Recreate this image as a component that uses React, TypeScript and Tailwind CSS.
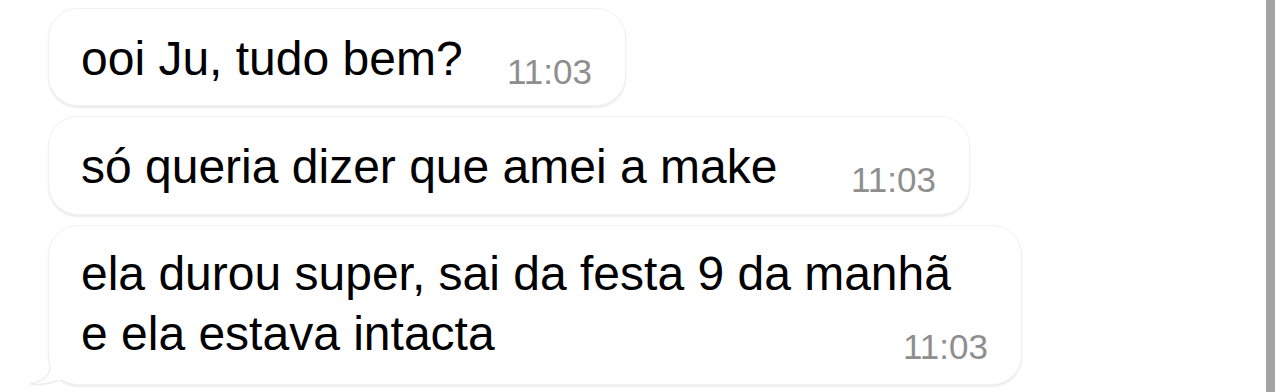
export default function App() {
  return (
    <div
      className="flex h-[392px] w-[1284px] overflow-hidden bg-white text-black"
      style={{ fontFamily: '"Liberation Sans", Arial, sans-serif' }}
    >
      <div className="flex flex-1 flex-col gap-[10px] pl-12 pt-2">
        {/* message 1 */}
        <div className="flex h-[98px] w-[578px] items-start justify-between rounded-[30px] border border-[#f1f1f1] bg-white pl-8 pr-[33px] pt-5 shadow-[0_2px_2px_rgba(0,0,0,0.08)]">
          <p className="text-[48px] leading-[60px]">ooi Ju, tudo bem?</p>
          <span className="mt-[25px] text-[35px] leading-[35px] text-[#8e8e8e]">11:03</span>
        </div>

        {/* message 2 */}
        <div className="flex h-[99px] w-[922px] items-start justify-between rounded-[30px] border border-[#f1f1f1] bg-white pl-8 pr-[33px] pt-5 shadow-[0_2px_2px_rgba(0,0,0,0.08)]">
          <p className="text-[48px] leading-[60px]">só queria dizer que amei a make</p>
          <span className="mt-[25px] text-[35px] leading-[35px] text-[#8e8e8e]">11:03</span>
        </div>

        {/* message 3 */}
        <div className="relative h-[160px] w-[974px]">
          <div className="flex h-full flex-col rounded-[30px] border border-[#f1f1f1] bg-white pl-8 pr-[33px] pt-[18px] shadow-[0_2px_2px_rgba(0,0,0,0.08)]">
            <p className="text-[48px] leading-[60px]">ela durou super, sai da festa 9 da manhã</p>
            <div className="flex items-start justify-between">
              <p className="text-[48px] leading-[60px]">e ela estava intacta</p>
              <span className="mt-[25px] text-[35px] leading-[35px] text-[#8e8e8e]">11:03</span>
            </div>
          </div>
          <svg
            className="absolute -left-[20px] bottom-[-3px]"
            width="40"
            height="24"
            viewBox="0 0 40 24"
          >
            <path
              d="M22 0 C22 10 18 17 2 20 C12 21 22 20 30 16 L40 16 L40 0 Z"
              fill="#ffffff"
            />
            <path
              d="M22 2 C22 11 17 17 2 20 C12 21 22 20 30 16"
              fill="none"
              stroke="#ececec"
              strokeWidth="1.5"
            />
          </svg>
        </div>
      </div>

      <div className="h-full w-[9px] bg-[#a3a3a3]" />
      <div className="h-full w-[9px] bg-white" />
    </div>
  );
}
